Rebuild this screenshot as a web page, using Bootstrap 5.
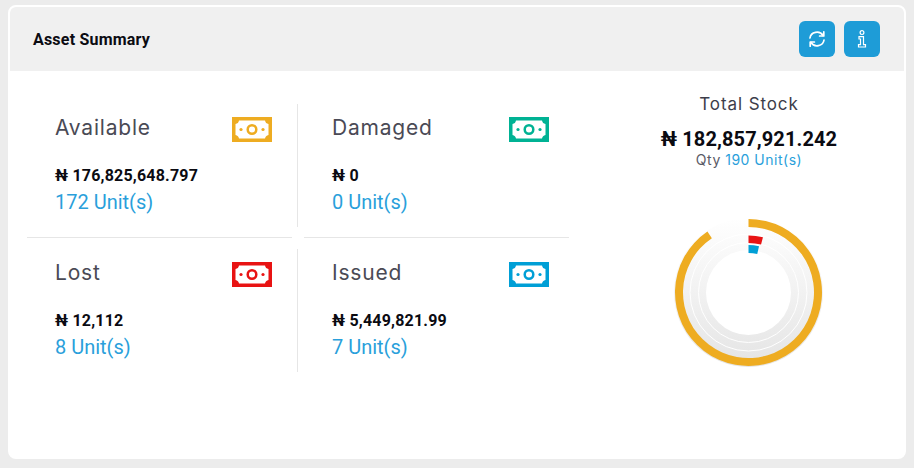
<!DOCTYPE html>
<html lang="en">
<head>
    <meta charset="UTF-8">
    <meta name="viewport" content="width=device-width, initial-scale=1.0">
    <title>Asset Summary</title>
    <link rel="stylesheet" href="https://cdn.jsdelivr.net/npm/bootstrap@5.3.0/dist/css/bootstrap.min.css">
    <style>
        body {
            background-color: #ececec;
            font-family: Roboto, sans-serif;
            padding: 5px 8px 8px 8px;
            overflow: hidden;
        }

        .summary-card {
            height: 454px;
            border: 2px solid #fff;
            border-radius: 8px;
            background-color: #fff;
            overflow: hidden;
        }

        .summary-head {
            height: 64px;
            padding: 0 24px 0 23px;
            background-color: #f0f0f0;
            border-bottom: 0;
            border-radius: 0;
        }

        .summary-title {
            font-size: 16px;
            line-height: 26px;
            padding-top: 1px;
            font-weight: 700;
            color: #0b0b12;
            letter-spacing: .2px;
        }

        .head-btns {
            gap: 9px;
        }

        .head-btn {
            width: 36px;
            height: 36px;
            padding: 0;
            border: 0;
            border-radius: 6px;
            background-color: #1e9cd7;
        }

        .stats-side {
            width: 584px;
            padding: 33px 0 0 17px;
        }

        .stat-box {
            height: 123px;
        }

        .stat-left {
            width: 271px;
            padding: 11px 25px 0 28px;
            border-right: 1px solid #e6e6e6;
        }

        .stat-right {
            width: 271px;
            padding: 11px 20px 0 34px;
        }

        .stat-name {
            font-family: Inter, sans-serif;
            font-size: 21px;
            line-height: 26px;
            color: #4a4a55;
            letter-spacing: .8px;
        }

        .bill-icon {
            margin-top: 2px;
        }

        .stat-money {
            margin-top: 23px;
            font-size: 16px;
            line-height: 22px;
            font-weight: 700;
            color: #0b0b12;
            letter-spacing: .2px;
        }

        .stat-units {
            margin-top: 2px;
            font-size: 20px;
            line-height: 26px;
            color: #2a9fdb;
        }

        .rule-row {
            gap: 12px;
            margin: 10px 0 11px 0;
        }

        .rule-row div {
            height: 1px;
            background-color: #e6e6e6;
        }

        .rule-a {
            width: 265px;
        }

        .rule-b {
            width: 265px;
        }

        .stock-side {
            width: 310px;
            padding-top: 21px;
            text-align: center;
        }

        .stock-name {
            font-family: Inter, sans-serif;
            font-size: 17px;
            line-height: 24px;
            color: #3d3d4a;
            letter-spacing: .9px;
        }

        .stock-money {
            margin-top: 11px;
            font-size: 20px;
            line-height: 24px;
            font-weight: 700;
            color: #0b0b12;
            letter-spacing: .1px;
        }

        .stock-qty {
            font-family: Inter, sans-serif;
            font-size: 14px;
            line-height: 18px;
            color: #5a5a66;
            letter-spacing: .5px;
        }

        .stock-qty span {
            color: #2a9fdb;
        }

        .donut-wrap {
            margin-top: 43px;
        }
    </style>
</head>
<body>
    <div class="card summary-card">
        <div class="card-header summary-head d-flex align-items-center justify-content-between">
            <span class="summary-title">Asset Summary</span>
            <div class="head-btns d-flex">
                <button type="button" class="btn head-btn d-flex align-items-center justify-content-center">
                    <svg width="18" height="18" viewBox="0 0 18 18" fill="none" stroke="#fff" stroke-width="1.7" stroke-linecap="round" stroke-linejoin="round"><path d="M2 8A7 6.5 0 0 1 15 5.5"/><path d="M15.8 1.8V6H11.6"/><path d="M16 10A7 6.5 0 0 1 3 12.5"/><path d="M2.2 16.2V12H6.4"/></svg>
                </button>
                <button type="button" class="btn head-btn d-flex align-items-center justify-content-center">
                    <svg width="10" height="18" viewBox="0 0 10 18" fill="none" stroke="#fff" stroke-width="1.2"><circle cx="5" cy="2.600" r="1.900"/><path d="M2 6.700H6.500V14.600H8.500V17H1.500V14.600H3.500V9H2Z"/></svg>
                </button>
            </div>
        </div>
        <div class="d-flex">
            <div class="stats-side" id="stats"></div>
            <div class="stock-side">
                <div class="stock-name">Total Stock</div>
                <div class="stock-money">₦ 182,857,921.242</div>
                <div class="stock-qty">Qty <span>190 Unit(s)</span></div>
                <div class="donut-wrap d-flex justify-content-center">
                    <svg id="donut" width="160" height="160" viewBox="-79.500 -80.500 160 160">
                        <defs>
                            <linearGradient id="trackFill" x1="0" y1="0" x2="0" y2="1">
                                <stop offset="0" stop-color="#ffffff"/>
                                <stop offset="1" stop-color="#e4e4e4"/>
                            </linearGradient>
                        </defs>
                    </svg>
                </div>
            </div>
        </div>
    </div>
    <script>
        // quadrants of the summary, left to right then top to bottom
        const stats = [
            { name: 'Available', money: '176,825,648.797', units: 172, color: '#eeac21' },
            { name: 'Damaged', money: '0', units: 0, color: '#00b294' },
            { name: 'Lost', money: '12,112', units: 8, color: '#e81313' },
            { name: 'Issued', money: '5,449,821.99', units: 7, color: '#009fd6' }
        ];

        function billIcon(color) {
            return `<svg class="bill-icon" width="40" height="25" viewBox="0 0 40 25"><path fill="${color}" fill-rule="evenodd" d="M0 0H40V25H0ZM7 3.500Q6.500 6.500 3.500 7V18Q6.500 18.500 7 21.500H33Q33.500 18.500 36.500 18V7Q33.500 6.500 33 3.500Z"/><circle cx="20" cy="12.500" r="4.300" fill="none" stroke="${color}" stroke-width="2.500"/><circle cx="9" cy="12.500" r="1.600" fill="${color}"/><circle cx="31" cy="12.500" r="1.600" fill="${color}"/></svg>`;
        }

        function statBox(s, cls) {
            return `<div class="stat-box ${cls}">
                <div class="d-flex justify-content-between align-items-start">
                    <span class="stat-name">${s.name}</span>${billIcon(s.color)}
                </div>
                <div class="stat-money">₦ ${s.money}</div>
                <div class="stat-units">${s.units} Unit(s)</div>
            </div>`;
        }

        document.getElementById('stats').innerHTML =
            `<div class="d-flex">${statBox(stats[0], 'stat-left')}${statBox(stats[1], 'stat-right')}</div>
             <div class="rule-row d-flex"><div class="rule-a"></div><div class="rule-b"></div></div>
             <div class="d-flex">${statBox(stats[2], 'stat-left')}${statBox(stats[3], 'stat-right')}</div>`;

        // ring from 12 o'clock, clockwise
        function arcPath(r0, r1, deg) {
            const a = deg * Math.PI / 180;
            const large = deg > 180 ? 1 : 0;
            const pt = (r, t) => `${(r * Math.sin(t)).toFixed(2)} ${(-r * Math.cos(t)).toFixed(2)}`;
            return `M${pt(r1, 0)}A${r1} ${r1} 0 ${large} 1 ${pt(r1, a)}L${pt(r0, a)}A${r0} ${r0} 0 ${large} 0 ${pt(r0, 0)}Z`;
        }

        const rings = [
            { r0: 65.500, r1: 73.500, deg: 326, color: '#eeac21' },
            { r0: 49.500, r1: 57, deg: 14.700, color: '#e81313' },
            { r0: 39.500, r1: 47.500, deg: 12.800, color: '#009fd6' }
        ];
        let svg = '<circle r="74.500" fill="url(#trackFill)"/>';
        svg += '<circle r="58.500" fill="none" stroke="#fff" stroke-width="1"/>';
        svg += '<circle r="50" fill="none" stroke="#fff" stroke-width="1"/>';
        svg += '<circle r="42.500" fill="#fff"/>';
        rings.forEach(r => {
            svg += `<path d="${arcPath(r.r0, r.r1, r.deg)}" fill="${r.color}"/>`;
        });
        document.getElementById('donut').insertAdjacentHTML('beforeend', svg);
    </script>
    <script src="https://cdn.jsdelivr.net/npm/bootstrap@5.3.0/dist/js/bootstrap.bundle.min.js"></script>
</body>
</html>
